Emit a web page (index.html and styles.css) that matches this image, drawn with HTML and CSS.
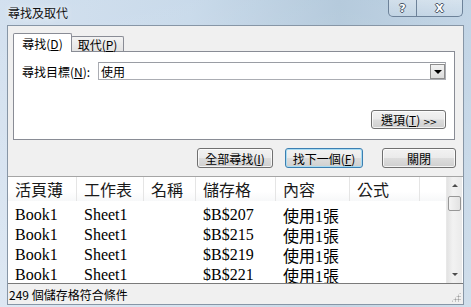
FILE: index.html
```html
<!DOCTYPE html>
<html lang="zh-Hant">
<head>
    <meta charset="UTF-8">
    <title>尋找及取代</title>
    <link rel="stylesheet" href="styles.css">
</head>
<body>

    <div class="window">
        <div class="titlebar">
            <span class="title">尋找及取代</span>
            <div class="caption-buttons">
                <span class="cap-btn help">?</span>
                <span class="cap-btn close">X</span>
            </div>
        </div>

        <div class="client">
            <div class="tabs">
                <span class="tab active">尋找(<u>D</u>)</span>
                <span class="tab">取代(<u>P</u>)</span>
            </div>

            <div class="panel">
                <div class="field-row">
                    <label class="field-label">尋找目標(<u>N</u>):</label>
                    <div class="combo">
                        <span class="combo-text">使用</span>
                        <span class="combo-arrow"></span>
                    </div>
                </div>
                <div class="panel-actions">
                    <button class="btn btn-options">選項(<u>T</u>) <span class="chev">&gt;&gt;</span></button>
                </div>
            </div>

            <div class="actions">
                <button class="btn btn-findall">全部尋找(<u>I</u>)</button>
                <button class="btn btn-next default">找下一個(<u>F</u>)</button>
                <button class="btn btn-close">關閉</button>
            </div>

            <div class="results">
                <div class="grid">
                    <div class="head">
                        <span>活頁薄</span>
                        <span>工作表</span>
                        <span>名稱</span>
                        <span>儲存格</span>
                        <span>內容</span>
                        <span>公式</span>
                        <span></span>
                    </div>
                    <div class="rows">
                        <div class="row"><span>Book1</span><span>Sheet1</span><span></span><span>$B$207</span><span>使用1張</span><span></span><span></span></div>
                        <div class="row"><span>Book1</span><span>Sheet1</span><span></span><span>$B$215</span><span>使用1張</span><span></span><span></span></div>
                        <div class="row"><span>Book1</span><span>Sheet1</span><span></span><span>$B$219</span><span>使用1張</span><span></span><span></span></div>
                        <div class="row"><span>Book1</span><span>Sheet1</span><span></span><span>$B$221</span><span>使用1張</span><span></span><span></span></div>
                    </div>
                </div>
                <div class="scrollbar">
                    <span class="sb-arrow up"></span>
                    <span class="sb-thumb"></span>
                    <span class="sb-space"></span>
                    <span class="sb-arrow down"></span>
                </div>
            </div>

            <div class="status">
                <span>249 個儲存格符合條件</span>
                <span class="grip"></span>
            </div>
        </div>
    </div>

</body>
</html>
```

FILE: styles.css
```css
* {
    box-sizing: border-box;
}

body {
    margin: 0;
    width: 471px;
    height: 307px;
    overflow: hidden;
    font-family: "Noto Sans CJK TC", "DejaVu Sans", sans-serif;
    font-size: 12px;
    color: #000;
}

u {
    text-decoration: underline;
    text-underline-offset: 1px;
}

.window {
    width: 471px;
    height: 307px;
    padding: 0 7px 10px 7px;
    display: flex;
    flex-direction: column;
    background:
        linear-gradient(180deg, rgba(255, 255, 255, 0.15), rgba(255, 255, 255, 0.35)),
        linear-gradient(90deg, #cbdbec 0%, #c0d4e7 40%, #a8c1d6 72%, #b7cde1 100%);
}

/* title bar */
.titlebar {
    height: 25px;
    flex: none;
    display: flex;
    align-items: flex-start;
}

.title {
    padding-left: 1px;
    line-height: 25px;
    font-size: 12px;
    color: #111;
    text-shadow: 0 0 6px rgba(255, 255, 255, 0.9);
}

.caption-buttons {
    margin-left: auto;
    margin-right: 1px;
    display: flex;
    height: 17px;
    border: 1px solid #6d8299;
    border-top: none;
    border-radius: 0 0 5px 5px;
    overflow: hidden;
    background: linear-gradient(180deg, rgba(255, 255, 255, 0.35), rgba(255, 255, 255, 0.1));
}

.cap-btn {
    display: flex;
    align-items: center;
    justify-content: center;
    font-family: "DejaVu Sans", sans-serif;
    font-weight: bold;
    font-size: 11px;
    color: #fff;
    text-shadow: 1px 0 0 #4a5868, -1px 0 0 #4a5868, 0 1px 0 #4a5868, 0 -1px 0 #4a5868;
}

.cap-btn.help {
    width: 28px;
    border-right: 1px solid #6d8299;
}

.cap-btn.close {
    width: 45px;
}

/* client area */
.client {
    flex: 1;
    display: flex;
    flex-direction: column;
    background: #f0f0f0;
    border: 1px solid #8796a6;
}

.tabs {
    margin: 7px 0 0 5px;
    height: 18px;
    display: flex;
    align-items: flex-end;
}

.tab {
    position: relative;
    display: flex;
    align-items: center;
    justify-content: center;
    border: 1px solid #898c95;
    border-bottom: none;
    border-radius: 2px 2px 0 0;
}

.tab.active {
    z-index: 1;
    width: 59px;
    height: 19px;
    margin-bottom: -1px;
    background: #fff;
}

.tab:not(.active) {
    width: 53px;
    height: 15px;
    margin-left: -1px;
    background: linear-gradient(180deg, #f3f3f3, #e3e3e3);
}

.panel {
    margin: 0 8px 0 5px;
    height: 89px;
    flex: none;
    border: 1px solid #898c95;
    background: #fff;
    padding: 10px 8px 0 8px;
}

.field-row {
    display: flex;
    align-items: center;
    height: 18px;
}

.field-label {
    width: 76px;
}

.combo {
    width: 348px;
    height: 18px;
    display: flex;
    align-items: center;
    border: 1px solid #abadb3;
    border-top-color: #9a9da4;
    background: #fff;
}

.combo-text {
    flex: 1;
    padding-left: 2px;
}

.combo-arrow {
    width: 15px;
    height: 15px;
    border: 1px solid #8d8d8d;
    background: linear-gradient(180deg, #f2f2f2, #dcdcdc);
    display: flex;
    align-items: center;
    justify-content: center;
}

.combo-arrow::after {
    content: "";
    border-left: 4px solid transparent;
    border-right: 4px solid transparent;
    border-top: 4px solid #000;
    margin-top: 1px;
}

.panel-actions {
    margin-top: 30px;
    display: flex;
    justify-content: flex-end;
}

/* buttons */
.btn {
    height: 20px;
    padding: 0;
    font: inherit;
    color: #000;
    border: 1px solid #707070;
    border-radius: 3px;
    background: linear-gradient(180deg, #f2f2f2 0%, #ebebeb 48%, #dddddd 52%, #cfcfcf 100%);
    box-shadow: inset 0 0 0 1px rgba(255, 255, 255, 0.75);
}

.btn-options {
    width: 75px;
    height: 19px;
}

.chev {
    font-size: 9px;
    font-family: "DejaVu Sans", sans-serif;
    letter-spacing: -1px;
}

.actions {
    margin-top: 8px;
    height: 20px;
    flex: none;
    display: flex;
    justify-content: flex-end;
    padding-right: 7px;
}

.btn-findall {
    width: 76px;
}

.btn-next {
    width: 78px;
    margin-left: 12px;
}

.btn-close {
    width: 74px;
    margin-left: 19px;
}

.btn.default {
    border-color: #3c7fb1;
    box-shadow: inset 0 0 0 1px #a8dcf3;
}

/* results list */
.results {
    margin-top: 8px;
    flex: 1;
    min-height: 0;
    display: flex;
    border-top: 1px solid #a5a5a5;
    background: #fff;
    overflow: hidden;
}

.grid {
    flex: 1;
    overflow: hidden;
    font-size: 16px;
}

.head,
.row {
    display: grid;
    grid-template-columns: 69px 67px 52px 80px 74px 70px 1fr;
}

.head {
    height: 24px;
    align-items: stretch;
}

.head span {
    display: flex;
    align-items: center;
    padding-left: 7px;
    border-right: 1px solid #e5e5e5;
    color: #1a1a1a;
    background: linear-gradient(180deg, #fff 0%, #fff 60%, #f7f8f9 100%);
}

.head span:last-child {
    border-right: none;
}

.rows {
    padding-top: 2px;
}

.row {
    height: 20px;
    align-items: center;
    font-family: "Liberation Serif", "Noto Sans CJK TC", serif;
}

.row span {
    padding-left: 7px;
    white-space: nowrap;
}

.scrollbar {
    width: 16px;
    flex: none;
    margin-right: 1px;
    display: flex;
    flex-direction: column;
    background: linear-gradient(90deg, #e3e3e3, #f2f2f2 40%, #eaeaea);
    border-left: 1px solid #e8e8e8;
}

.sb-arrow {
    height: 17px;
    display: flex;
    align-items: center;
    justify-content: center;
}

.sb-arrow.up::after {
    content: "";
    border-left: 3px solid transparent;
    border-right: 3px solid transparent;
    border-bottom: 3px solid #4d4d4d;
}

.sb-arrow.down::after {
    content: "";
    border-left: 3px solid transparent;
    border-right: 3px solid transparent;
    border-top: 3px solid #4d4d4d;
}

.sb-thumb {
    height: 15px;
    margin: 2px 1px 0 1px;
    border: 1px solid #979797;
    border-radius: 2px;
    background: linear-gradient(90deg, #f4f4f4, #e2e2e2);
}

.sb-space {
    flex: 1;
}

/* status bar */
.status {
    height: 21px;
    flex: none;
    display: flex;
    align-items: center;
    padding-left: 1px;
    border-top: 1px solid #7a7a7a;
    background: #f0f0f0;
    position: relative;
}

.grip {
    position: absolute;
    right: 2px;
    bottom: 2px;
    width: 10px;
    height: 10px;
    background:
        radial-gradient(circle, #a0a0a0 45%, transparent 50%) 0 0 / 3px 3px;
    clip-path: polygon(100% 0, 100% 100%, 0 100%);
}
```
